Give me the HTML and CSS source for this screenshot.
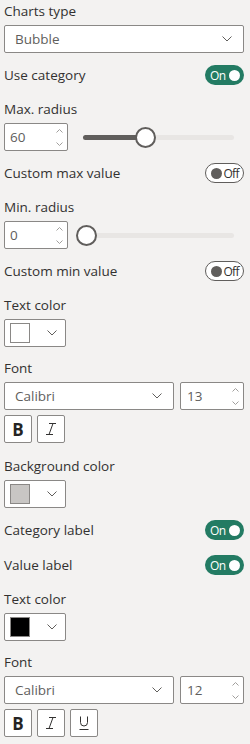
FILE: index.html
```html
<!DOCTYPE html>
<html lang="en">

<head>
    <meta charset="UTF-8">
    <meta name="viewport" content="width=device-width, initial-scale=1.0">
    <title>Format pane</title>
    <link rel="stylesheet" href="styles.css">
</head>

<body>
    <div class="pane">
        <div class="field">
            <div class="label">Charts type</div>
            <div class="select">
                <span>Bubble</span>
                <svg class="chevron" width="10" height="6" viewBox="0 0 10 6"><polyline points="0.5,0.5 5,5 9.5,0.5" /></svg>
            </div>
        </div>

        <div class="toggle-row">
            <span class="label">Use category</span>
            <span class="toggle on"><span class="toggle-text">On</span><span class="knob"></span></span>
        </div>

        <div class="field">
            <div class="label">Max. radius</div>
            <div class="range-row">
                <div class="number">
                    <span>60</span>
                    <span class="spin">
                        <svg width="7" height="4" viewBox="0 0 7 4"><polyline points="0.5,3.5 3.5,0.5 6.5,3.5" /></svg>
                        <svg width="7" height="4" viewBox="0 0 7 4"><polyline points="0.5,0.5 3.5,3.5 6.5,0.5" /></svg>
                    </span>
                </div>
                <div class="slider">
                    <div class="track"><div class="fill" style="width: 62px"></div></div>
                    <div class="thumb" style="left: 59px"></div>
                </div>
            </div>
        </div>

        <div class="toggle-row">
            <span class="label">Custom max value</span>
            <span class="toggle off"><span class="knob"></span><span class="toggle-text">Off</span></span>
        </div>

        <div class="field">
            <div class="label">Min. radius</div>
            <div class="range-row">
                <div class="number">
                    <span>0</span>
                    <span class="spin">
                        <svg width="7" height="4" viewBox="0 0 7 4"><polyline points="0.5,3.5 3.5,0.5 6.5,3.5" /></svg>
                        <svg width="7" height="4" viewBox="0 0 7 4"><polyline points="0.5,0.5 3.5,3.5 6.5,0.5" /></svg>
                    </span>
                </div>
                <div class="slider">
                    <div class="track"><div class="fill" style="width: 0px"></div></div>
                    <div class="thumb" style="left: 0px"></div>
                </div>
            </div>
        </div>

        <div class="toggle-row">
            <span class="label">Custom min value</span>
            <span class="toggle off"><span class="knob"></span><span class="toggle-text">Off</span></span>
        </div>

        <div class="field">
            <div class="label">Text color</div>
            <div class="color-pick">
                <span class="swatch swatch-white"></span>
                <svg class="chevron" width="10" height="6" viewBox="0 0 10 6"><polyline points="0.5,0.5 5,5 9.5,0.5" /></svg>
            </div>
        </div>

        <div class="field">
            <div class="label">Font</div>
            <div class="font-row">
                <div class="select font-select">
                    <span>Calibri</span>
                    <svg class="chevron" width="10" height="6" viewBox="0 0 10 6"><polyline points="0.5,0.5 5,5 9.5,0.5" /></svg>
                </div>
                <div class="number size-input">
                    <span>13</span>
                    <span class="spin">
                        <svg width="7" height="4" viewBox="0 0 7 4"><polyline points="0.5,3.5 3.5,0.5 6.5,3.5" /></svg>
                        <svg width="7" height="4" viewBox="0 0 7 4"><polyline points="0.5,0.5 3.5,3.5 6.5,0.5" /></svg>
                    </span>
                </div>
            </div>
            <div class="format-row">
                <span class="fmt-btn fmt-bold">B</span>
                <span class="fmt-btn">
                    <svg width="14" height="14" viewBox="0 0 14 14"><path d="M5 1.5h7M2 12.5h7M9 1.5L5 12.5" /></svg>
                </span>
            </div>
        </div>

        <div class="field">
            <div class="label">Background color</div>
            <div class="color-pick">
                <span class="swatch swatch-grey"></span>
                <svg class="chevron" width="10" height="6" viewBox="0 0 10 6"><polyline points="0.5,0.5 5,5 9.5,0.5" /></svg>
            </div>
        </div>

        <div class="toggle-row">
            <span class="label">Category label</span>
            <span class="toggle on"><span class="toggle-text">On</span><span class="knob"></span></span>
        </div>

        <div class="toggle-row">
            <span class="label">Value label</span>
            <span class="toggle on"><span class="toggle-text">On</span><span class="knob"></span></span>
        </div>

        <div class="field">
            <div class="label">Text color</div>
            <div class="color-pick">
                <span class="swatch swatch-black"></span>
                <svg class="chevron" width="10" height="6" viewBox="0 0 10 6"><polyline points="0.5,0.5 5,5 9.5,0.5" /></svg>
            </div>
        </div>

        <div class="field">
            <div class="label">Font</div>
            <div class="font-row">
                <div class="select font-select">
                    <span>Calibri</span>
                    <svg class="chevron" width="10" height="6" viewBox="0 0 10 6"><polyline points="0.5,0.5 5,5 9.5,0.5" /></svg>
                </div>
                <div class="number size-input">
                    <span>12</span>
                    <span class="spin">
                        <svg width="7" height="4" viewBox="0 0 7 4"><polyline points="0.5,3.5 3.5,0.5 6.5,3.5" /></svg>
                        <svg width="7" height="4" viewBox="0 0 7 4"><polyline points="0.5,0.5 3.5,3.5 6.5,0.5" /></svg>
                    </span>
                </div>
            </div>
            <div class="format-row">
                <span class="fmt-btn fmt-bold">B</span>
                <span class="fmt-btn">
                    <svg width="14" height="14" viewBox="0 0 14 14"><path d="M5 1.5h7M2 12.5h7M9 1.5L5 12.5" /></svg>
                </span>
                <span class="fmt-btn">
                    <svg width="14" height="16" viewBox="0 0 14 16"><path d="M3.5 1.5v6a3.5 3.5 0 0 0 7 0v-6M2.5 14.5h9" /></svg>
                </span>
            </div>
        </div>
    </div>
</body>

</html>
```

FILE: styles.css
```css
body {
    margin: 0;
    background-color: #f3f2f1;
    font-family: "Open Sans", "Noto Sans", sans-serif;
    font-size: 13px;
    color: #323130;
}

.pane {
    display: flex;
    flex-direction: column;
    padding: 1px 6px 0 4px;
}

.label {
    height: 20px;
    line-height: 20px;
    font-size: 13.5px;
    color: #323130;
}

.field .label {
    margin-bottom: 4px;
}

.field + .toggle-row {
    margin-top: 12px;
}

.toggle-row + .field {
    margin-top: 14px;
}

.field + .field {
    margin-top: 11px;
}

.toggle-row + .toggle-row {
    margin-top: 15px;
}

.format-row + * {
    margin-bottom: 0;
}

.select,
.number,
.color-pick {
    box-sizing: border-box;
    height: 28px;
    background-color: #fff;
    border: 1px solid #8a8886;
    border-radius: 2px;
    display: flex;
    align-items: center;
    color: #605e5c;
    font-size: 13.5px;
}

.select {
    justify-content: space-between;
    padding: 0 11px 0 10px;
}

.chevron polyline,
.spin polyline {
    fill: none;
    stroke: #605e5c;
    stroke-width: 1;
}

.spin polyline {
    stroke: #a19f9d;
}

.number {
    width: 64px;
    flex-shrink: 0;
    justify-content: space-between;
    padding: 0 4px 0 5px;
}

.spin {
    display: flex;
    flex-direction: column;
    gap: 9px;
}

.spin svg {
    display: block;
}

.range-row {
    display: flex;
    align-items: center;
}

.slider {
    position: relative;
    flex: 1;
    height: 28px;
    margin-left: 8px;
}

.track {
    position: absolute;
    left: 7px;
    right: 10px;
    top: 12px;
    height: 5px;
    border-radius: 3px;
    background-color: #e8e6e4;
}

.fill {
    height: 100%;
    border-radius: 3px;
    background-color: #605e5c;
}

.thumb {
    position: absolute;
    top: 4px;
    box-sizing: border-box;
    width: 21px;
    height: 21px;
    border-radius: 50%;
    background-color: #fff;
    border: 2px solid #605e5c;
}

.toggle-row {
    display: flex;
    justify-content: space-between;
    align-items: center;
    height: 20px;
}

.toggle {
    box-sizing: border-box;
    width: 39px;
    height: 20px;
    border-radius: 10px;
    display: flex;
    align-items: center;
    justify-content: space-between;
    font-size: 12px;
    letter-spacing: -0.6px;
}

.toggle.on {
    background-color: #237b63;
    color: #fff;
    padding: 0 4px 0 5px;
}

.toggle.off {
    background-color: #fff;
    border: 1px solid #605e5c;
    color: #323130;
    padding: 0 4px 0 5px;
}

.knob {
    width: 11px;
    height: 11px;
    border-radius: 50%;
    background-color: #fff;
}

.toggle.off .knob {
    background-color: #605e5c;
}

.color-pick {
    width: 62px;
    padding: 0 8px 0 5px;
    justify-content: space-between;
}

.swatch {
    box-sizing: border-box;
    width: 20px;
    height: 20px;
    border: 1px solid #8a8886;
}

.swatch-white {
    background-color: #fff;
}

.swatch-grey {
    background-color: #c8c6c4;
}

.swatch-black {
    background-color: #000;
}

.font-row {
    display: flex;
    gap: 6px;
}

.font-select {
    flex: 1;
}

.size-input {
    padding-left: 6px;
}

.format-row {
    display: flex;
    gap: 5px;
    margin-top: 5px;
    margin-bottom: 2px;
}

.fmt-btn {
    box-sizing: border-box;
    width: 28px;
    height: 28px;
    background-color: #fff;
    border: 1px solid #8a8886;
    border-radius: 2px;
    display: flex;
    align-items: center;
    justify-content: center;
    color: #252423;
}

.fmt-bold {
    font-size: 17px;
    font-weight: 700;
}

.fmt-btn path {
    fill: none;
    stroke: #323130;
    stroke-width: 1;
}
```
